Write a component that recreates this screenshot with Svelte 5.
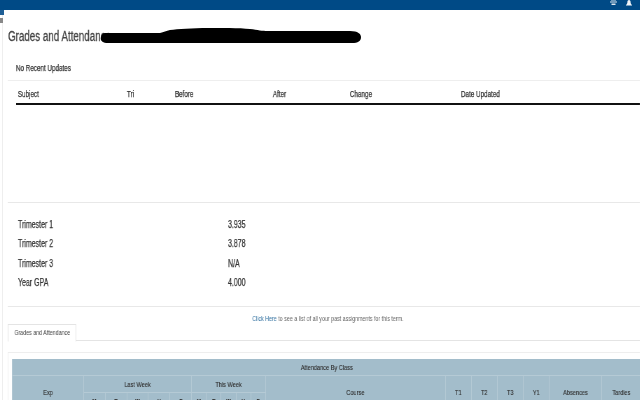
<script>
  const updateCols = ['Subject', 'Tri', 'Before', 'After', 'Change', 'Date Updated']
  const gpas = [
    { term: 'Trimester 1', value: '3.935' },
    { term: 'Trimester 2', value: '3.878' },
    { term: 'Trimester 3', value: 'N/A' },
    { term: 'Year GPA', value: '4.000' }
  ]
  const days = ['M', 'T', 'W', 'H', 'F']
  const terms = ['T1', 'T2', 'T3', 'Y1']
</script>

<div class="page">
  <header class="topbar">
    <svg class="icon printer" width="7" height="7" viewBox="0 0 7 7">
      <path d="M1 0h5v2.500H1zM0 3.500h7v1H0zM1.500 5.500h4V7h-4z" fill="#dfe8f0" />
    </svg>
    <svg class="icon" width="6" height="6" viewBox="0 0 6 6">
      <path d="M3 0c1.200 0 1.600 1 1.600 2.200 0 1.100.6 1.900 1.400 2.800v.5H0V5c.8-.9 1.400-1.700 1.400-2.800C1.400 1 1.800 0 3 0z" fill="#f2f5f8" />
    </svg>
  </header>

  <div class="rail">
    <span class="rail-tab"></span>
    <span class="rail-x"></span>
  </div>

  <!-- the source screenshot is squeezed sideways, so the content is laid out wide and scaled -->
  <main>
    <h1>Grades and Attendance</h1>

    <p class="recent">No Recent Updates</p>

    <div class="updates">
      <div class="updates-head">
        {#each updateCols as col}
          <span>{col}</span>
        {/each}
      </div>
    </div>

    <div class="gpa">
      {#each gpas as g}
        <div class="gpa-row">
          <span>{g.term}</span>
          <span>{g.value}</span>
        </div>
      {/each}
    </div>

    <p class="hint"><a href="#past">Click Here</a> to see a list of all your past assignments for this term.</p>

    <div class="tabs">
      <span class="tab">Grades and Attendance</span>
    </div>

    <section class="panel">
      <table>
        <colgroup>
          <col class="c-exp" />
          {#each days as _}
            <col class="c-last" />
          {/each}
          {#each days as _}
            <col class="c-this" />
          {/each}
          <col class="c-course" />
          {#each terms as _}
            <col class="c-term" />
          {/each}
          <col class="c-abs" />
          <col class="c-tardy" />
        </colgroup>
        <thead>
          <tr class="title-row">
            <th colspan="18">Attendance By Class</th>
          </tr>
          <tr class="week-row">
            <th rowspan="2">Exp</th>
            <th colspan="5">Last Week</th>
            <th colspan="5">This Week</th>
            <th rowspan="2">Course</th>
            {#each terms as t}
              <th rowspan="2">{t}</th>
            {/each}
            <th rowspan="2">Absences</th>
            <th rowspan="2">Tardies</th>
          </tr>
          <tr class="day-row">
            {#each days as d}
              <th>{d}</th>
            {/each}
            {#each days as d}
              <th>{d}</th>
            {/each}
          </tr>
        </thead>
      </table>
    </section>
  </main>

  <svg class="redact" width="262" height="16" viewBox="0 0 262 16">
    <path d="M5 5L60 5C64 4 66 3 70 2C85 0 130 -1 150 1C158 2 162 3 168 3L250 3C258 3 261 6 261 9C261 13 258 15 252 15L8 15C2 15 0 12 1 9C1 7 3 5 5 5z" fill="#000" />
  </svg>
</div>

<style>
  :global(body) {
    margin: 0;
    background: #fff;
    overflow: hidden;
  }

  .page {
    position: relative;
    width: 640px;
    height: 400px;
    overflow: hidden;
    font-family: "Liberation Sans", Arial, sans-serif;
    color: #333;
  }

  .topbar {
    height: 10px;
    background: #004a86;
    display: flex;
    justify-content: flex-end;
    align-items: flex-start;
    gap: 9px;
    padding-right: 8px;
    overflow: hidden;
  }

  .icon {
    display: block;
  }

  .printer {
    margin-top: -2px;
  }

  .rail {
    position: absolute;
    left: 0;
    top: 10px;
    bottom: 0;
    width: 2px;
    border-right: 1px solid #eee;
  }

  .rail-tab {
    position: absolute;
    left: 0;
    top: 0;
    width: 4px;
    height: 5px;
    background: #1f5f96;
  }

  .rail-x {
    position: absolute;
    left: 0;
    top: 8px;
    width: 3px;
    height: 5px;
    background: #888;
  }

  main {
    width: 914.300px;
    transform: scaleX(0.7);
    transform-origin: 0 0;
    will-change: transform;
    -webkit-text-stroke: 0.25px #333;
  }

  h1 {
    margin: 0;
    padding: 17px 0 0 11.400px;
    height: 35px;
    box-sizing: border-box;
    font-size: 14px;
    line-height: 18px;
    font-weight: 400;
    color: #444;
    -webkit-text-stroke: 0.3px #444;
  }

  .redact {
    position: absolute;
    left: 100px;
    top: 28px;
  }

  .recent {
    margin: 0 0 0 11.400px;
    padding: 17px 0 0 11.400px;
    height: 36px;
    box-sizing: border-box;
    font-size: 9px;
    line-height: 12px;
    border-bottom: 1px solid #eee;
  }

  .updates {
    margin-left: 11.400px;
    height: 121px;
    border-bottom: 1px solid #e8e8e8;
  }

  .updates-head {
    margin-left: 11.400px;
    height: 19px;
    padding-top: 3px;
    border-bottom: 2px solid #111;
    display: grid;
    grid-template-columns: 155.700px 68.600px 140px 110px 158.600px 1fr;
    align-items: center;
    padding-left: 2.800px;
    font-size: 9px;
  }

  .gpa {
    margin-left: 25.700px;
    padding-top: 12px;
    height: 103px;
    box-sizing: border-box;
    font-size: 10px;
  }

  .gpa-row {
    height: 19.300px;
    display: grid;
    grid-template-columns: 300px 1fr;
    align-items: center;
  }

  .hint {
    margin: 0 0 0 11.400px;
    border-top: 1px solid #e8e8e8;
    height: 10px;
    padding: 7px 0 0 11px;
    text-align: center;
    font-size: 7.600px;
    line-height: 10px;
    color: #666;
    -webkit-text-stroke: 0;
  }

  .hint a {
    color: #2f6f9f;
    text-decoration: none;
  }

  .tabs {
    margin-left: 11.400px;
    height: 16px;
    border-bottom: 1px solid #e4e4e4;
    display: flex;
  }

  .tab {
    height: 16px;
    padding: 0 8px;
    border: 1px solid #e4e4e4;
    border-bottom: 1px solid #fff;
    font-size: 7.600px;
    line-height: 16px;
    white-space: nowrap;
    color: #444;
    background: #fff;
    -webkit-text-stroke: 0;
  }

  .panel {
    margin: 11px 0 0 11.400px;
    border-top: 1px solid #eee;
    border-left: 1px solid #eee;
    padding: 6px 0 0 5px;
  }

  table {
    border-collapse: collapse;
    table-layout: fixed;
    width: 898px;
    background: #a3bdcb;
    font-size: 8px;
  }

  .c-exp { width: 101.400px; }
  .c-last { width: 30.900px; }
  .c-this { width: 21.100px; }
  .c-course { width: 257px; }
  .c-term { width: 37.100px; }
  .c-abs { width: 75px; }
  .c-tardy { width: 56px; }

  th {
    border: 1px solid #b5cad5;
    font-weight: 400;
    color: #333;
    padding: 0;
    -webkit-text-stroke: 0.15px #333;
  }

  .title-row th {
    height: 16px;
    border-top: none;
  }

  .week-row th {
    height: 16px;
  }

  .day-row th {
    height: 16px;
    font-weight: 700;
    font-size: 7px;
  }
</style>
